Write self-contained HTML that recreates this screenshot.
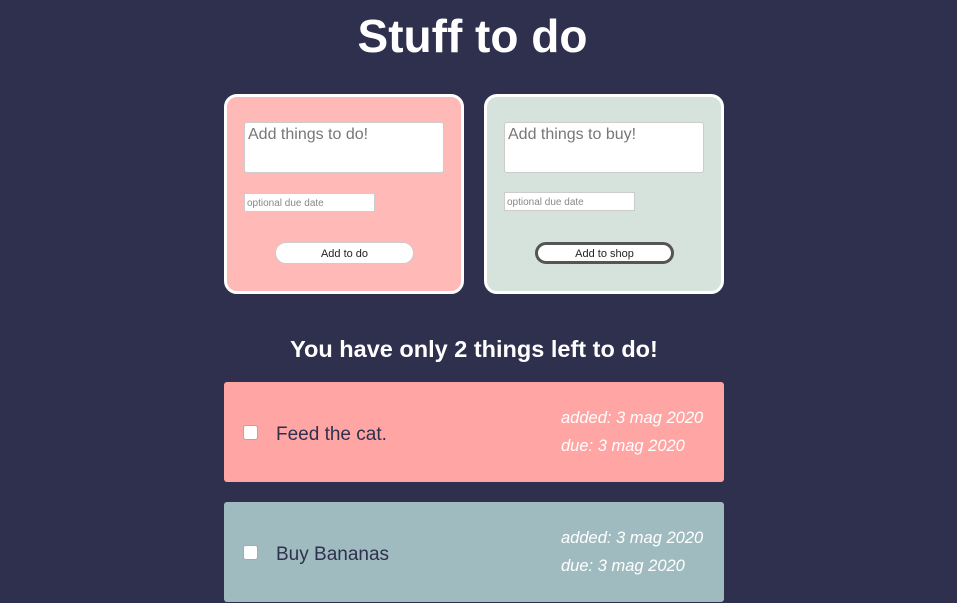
<!DOCTYPE html>
<html><head><meta charset="utf-8"><style>
*{box-sizing:border-box;margin:0;padding:0}
body{width:957px;height:603px;background:#2e304d;font-family:"Liberation Sans",sans-serif;position:relative;overflow:hidden}
h1{position:absolute;left:-6px;width:957px;top:8px;text-align:center;color:#fff;font-size:46px;font-weight:bold;line-height:56px}
.card{position:absolute;top:94px;width:240px;height:200px;border:3px solid #fff;border-radius:13px}
.ta{position:absolute;left:17px;top:25px;width:200px;height:51px;background:#fff;border:1px solid #ccc;border-radius:3px;color:#777;font-size:16px;padding:3px 3px}
.di{position:absolute;left:17px;width:131px;height:19px;background:#fff;border:1px solid #ccc;color:#888;font-size:10px;padding:4px 2px 0}
.btn{position:absolute;left:48px;top:145px;width:139px;height:22px;background:#fff;border:1px solid #ccc;border-radius:11px;font-size:11px;text-align:center;line-height:22px;color:#222}
h2{position:absolute;left:0;width:948px;top:336px;text-align:center;color:#fff;font-size:23.5px;font-weight:bold}
.item{position:absolute;left:224px;width:500px;height:100px;border-radius:3px}
.cb{position:absolute;left:19px;top:43px;width:15px;height:15px;background:#fff;border:1px solid #aaa;border-radius:3px}
.txt{position:absolute;left:52px;top:42px;font-size:19px;color:#2e304d}
.d{position:absolute;left:337px;color:#fff;font-style:italic;font-size:16.5px}
</style></head><body>
<h1>Stuff to do</h1>
<div class="card" style="left:224px;background:#ffb9b7">
<div class="ta">Add things to do!</div>
<div class="di" style="top:96px">optional due date</div>
<div class="btn">Add to do</div>
</div>
<div class="card" style="left:484px;background:#d6e3dd">
<div class="ta">Add things to buy!</div>
<div class="di" style="top:95px">optional due date</div>
<div class="btn" style="border:3px solid #555;line-height:18px">Add to shop</div>
</div>
<h2>You have only 2 things left to do!</h2>
<div class="item" style="top:382px;background:#ffa5a4">
<div class="cb"></div><div class="txt">Feed the cat.</div>
<div class="d" style="top:27px">added: 3 mag 2020</div>
<div class="d" style="top:55px">due: 3 mag 2020</div>
</div>
<div class="item" style="top:502px;background:#a0bbbf">
<div class="cb"></div><div class="txt">Buy Bananas</div>
<div class="d" style="top:27px">added: 3 mag 2020</div>
<div class="d" style="top:55px">due: 3 mag 2020</div>
</div>
</body></html>
